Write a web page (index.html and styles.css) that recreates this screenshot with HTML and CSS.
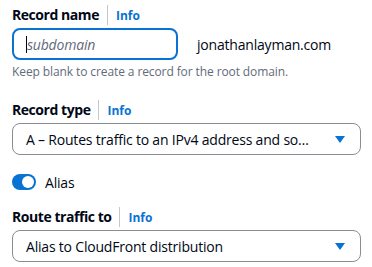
FILE: index.html
```html
<!DOCTYPE html>
<html lang="en">
<head>
  <meta charset="UTF-8">
  <title>Quick create record</title>
  <link rel="stylesheet" href="styles.css">
</head>
<body>
<div class="form">
  <div class="field first">
    <div class="label-row">
      <span class="label">Record name</span>
      <span class="info">Info</span>
    </div>
    <div class="name-row">
      <div class="input focused">
        <span class="caret"></span><span class="placeholder">subdomain</span>
      </div>
      <span class="domain">jonathanlayman.com</span>
    </div>
    <div class="hint">Keep blank to create a record for the root domain.</div>
  </div>

  <div class="field">
    <div class="label-row">
      <span class="label">Record type</span>
      <span class="info">Info</span>
    </div>
    <div class="select">
      <span class="value">A – Routes traffic to an IPv4 address and so…</span>
      <span class="arrow"></span>
    </div>
  </div>

  <div class="toggle-row">
    <span class="toggle"><span class="knob"></span></span>
    <span class="toggle-label">Alias</span>
  </div>

  <div class="field after-toggle">
    <div class="label-row">
      <span class="label">Route traffic to</span>
      <span class="info">Info</span>
    </div>
    <div class="select">
      <span class="value">Alias to CloudFront distribution</span>
      <span class="arrow"></span>
    </div>
  </div>
</div>
</body>
</html>
```

FILE: styles.css
```css
* { box-sizing: border-box; }
body {
  margin: 0;
  font-family: 'Open Sans', 'Noto Sans', sans-serif;
  font-size: 14px;
  letter-spacing: -0.2px;
  color: #000716;
  background: #fff;
}
.form {
  padding: 4px 0 0 12px;
  width: 361px;
}
.field { margin-top: 19px; }
.field.first { margin-top: 0; }
.field.after-toggle { margin-top: 14px; }
.label-row {
  display: flex;
  align-items: center;
  height: 22px;
  margin-bottom: 2px;
}
.label {
  font-weight: bold;
  font-size: 14px;
  line-height: 20px;
  letter-spacing: -0.45px;
  padding-right: 8px;
  border-right: 1px solid #c6c6cd;
}
.info {
  color: #0972d3;
  font-weight: bold;
  font-size: 12px;
  letter-spacing: 0;
  padding-left: 8px;
}
.name-row {
  display: flex;
  align-items: center;
}
.input {
  width: 166px;
  height: 32px;
  border: 2px solid #0972d3;
  border-radius: 8px;
  display: flex;
  align-items: center;
  padding-left: 12px;
}
.caret {
  width: 1px;
  height: 17px;
  background: #000716;
}
.placeholder {
  color: #5f6b7a;
  font-style: italic;
}
.domain {
  margin-left: 19px;
}
.hint {
  margin-top: 4px;
  font-size: 12px;
  line-height: 16px;
  letter-spacing: -0.1px;
  color: #5f6b7a;
}
.select {
  height: 32px;
  border: 1px solid #8c8c94;
  border-radius: 8px;
  display: flex;
  align-items: center;
  justify-content: space-between;
  padding: 0 15px 0 13px;
}
.arrow {
  width: 0;
  height: 0;
  border-left: 5px solid transparent;
  border-right: 5px solid transparent;
  border-top: 7px solid #0972d3;
}
.toggle-row {
  display: flex;
  align-items: center;
  margin-top: 17px;
  height: 20px;
}
.toggle {
  width: 24px;
  height: 16px;
  border-radius: 8px;
  background: #0972d3;
  display: flex;
  align-items: center;
  justify-content: flex-end;
  padding-right: 2px;
}
.knob {
  width: 12px;
  height: 12px;
  border-radius: 50%;
  background: #fff;
}
.toggle-label {
  margin-left: 9px;
}
```
